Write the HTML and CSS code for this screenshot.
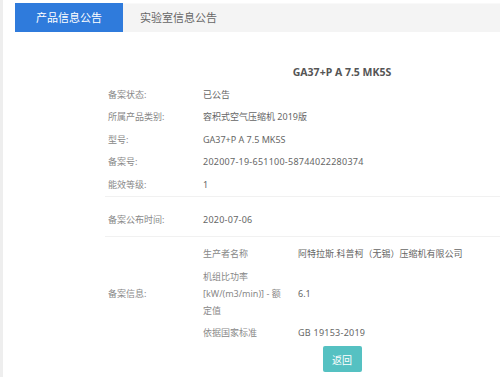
FILE: index.html
```html
<!DOCTYPE html>
<html lang="zh-CN">
<head>
    <meta charset="UTF-8">
    <meta name="viewport" content="width=device-width, initial-scale=1.0">
    <title>产品信息公告</title>
    <link rel="stylesheet" href="styles.css">
</head>
<body>
    <div class="page">
        <div class="tabs">
            <div class="tab active">产品信息公告</div>
            <div class="tab">实验室信息公告</div>
        </div>
        <div class="detail">
            <div class="title">GA37+P A 7.5 MK5S</div>
            <div class="section">
                <div class="row"><span class="label">备案状态:</span><span class="value">已公告</span></div>
                <div class="row"><span class="label">所属产品类别:</span><span class="value">容积式空气压缩机 2019版</span></div>
                <div class="row"><span class="label">型号:</span><span class="value">GA37+P A 7.5 MK5S</span></div>
                <div class="row"><span class="label">备案号:</span><span class="value num">202007-19-651100-58744022280374</span></div>
                <div class="row"><span class="label">能效等级:</span><span class="value">1</span></div>
            </div>
            <div class="section single">
                <div class="row"><span class="label">备案公布时间:</span><span class="value num">2020-07-06</span></div>
            </div>
            <div class="section info">
                <div class="label">备案信息:</div>
                <div class="params">
                    <div class="param"><span class="param-name">生产者名称</span><span class="param-value">阿特拉斯.科普柯（无锡）压缩机有限公司</span></div>
                    <div class="param multi"><span class="param-name">机组比功率<br>[kW/(m3/min)] - 额<br>定值</span><span class="param-value">6.1</span></div>
                    <div class="param"><span class="param-name">依据国家标准</span><span class="param-value num">GB 19153-2019</span></div>
                </div>
            </div>
            <div class="actions">
                <button class="btn-back">返回</button>
            </div>
        </div>
    </div>
</body>
</html>
```

FILE: styles.css
```css
body {
    margin: 0;
    background: #ffffff;
    font-family: "Noto Sans", "Noto Sans CJK SC", sans-serif;
    color: #777777;
}
.page {
    border-left: 3px solid #eeeeee;
    padding-top: 3px;
    min-height: 374px;
}
.tabs {
    display: flex;
    margin-left: 12px;
    height: 29px;
    background: #f4f4f4;
    border-top: 1px solid #f9f9f9;
    box-sizing: border-box;
}
.tab {
    padding: 0 21px 0 17px;
    line-height: 28px;
    font-size: 11px;
    color: #666666;
}
.tab.active {
    padding: 0 21px;
    background: #2f7bdc;
    color: #ffffff;
    margin-top: -1px;
    line-height: 30px;
    height: 29px;
}
.detail {
    margin-left: 102px;
    font-size: 9px;
}
.title {
    margin-top: 32px;
    padding-left: 79px;
    text-align: center;
    font-size: 10.5px;
    font-weight: bold;
    color: #555555;
    line-height: 16px;
}
.section {
    border-bottom: 1px solid #f1f1f1;
    margin-top: 3px;
}
.row {
    display: flex;
    align-items: center;
    height: 22.5px;
    padding-left: 3px;
}
.label {
    width: 95px;
    flex-shrink: 0;
    color: #888888;
}
.value {
    color: #666666;
}
.num {
    letter-spacing: 0.25px;
}
.section.single {
    margin-top: 0;
    padding: 12px 0 5px;
}
.section.info {
    margin-top: 0;
    display: flex;
    align-items: center;
    padding: 5px 0 0 3px;
    border-bottom: none;
}
.param {
    display: flex;
    align-items: center;
    min-height: 22.5px;
}
.param.multi {
    padding: 3px 0;
    line-height: 17px;
}
.param-name {
    width: 95px;
    color: #888888;
}
.param-value {
    color: #666666;
}
.actions {
    padding-left: 79px;
    text-align: center;
    margin-top: 2px;
}
.btn-back {
    width: 39px;
    height: 26px;
    border: none;
    border-radius: 2px;
    background: #55c1c2;
    color: #ffffff;
    font-family: "Noto Sans CJK SC", sans-serif;
    font-size: 10px;
    padding: 0;
}
```
